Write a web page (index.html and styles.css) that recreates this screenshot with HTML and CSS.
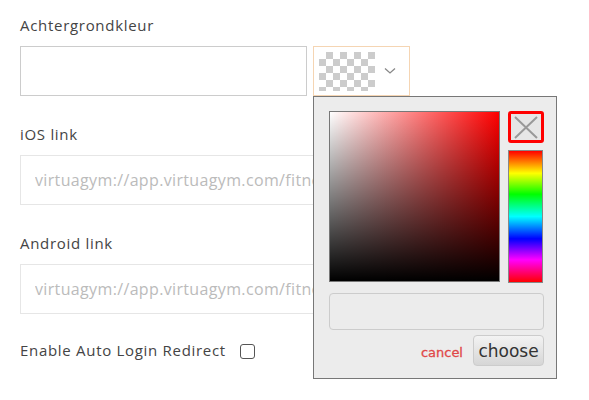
FILE: index.html
```html
<!DOCTYPE html>
<html lang="nl">
<head>
  <meta charset="UTF-8">
  <meta name="viewport" content="width=device-width, initial-scale=1.0">
  <title>Instellingen</title>
  <link rel="stylesheet" href="styles.css">
</head>
<body>
  <div class="form">
    <div class="group">
      <label class="label">Achtergrondkleur</label>
      <div class="color-row">
        <input type="text" class="input color-input">
        <div class="picker-wrap">
          <div class="swatch">
            <span class="checker"></span>
            <svg class="chevron" width="12" height="8" viewBox="0 0 12 8"><path d="M1 1.5 L6 6 L11 1.5" fill="none" stroke="#888" stroke-width="1.3"/></svg>
          </div>
          <div class="picker">
            <div class="picker-top">
              <div class="sat"></div>
              <div class="side">
                <div class="clear">
                  <svg width="28" height="25" viewBox="0 0 28 25"><path d="M3 2 L25 23 M25 2 L3 23" stroke="#999" stroke-width="2"/></svg>
                </div>
                <div class="hue"></div>
              </div>
            </div>
            <input type="text" class="picker-input">
            <div class="picker-actions">
              <a class="cancel">cancel</a>
              <button class="choose">choose</button>
            </div>
          </div>
        </div>
      </div>
    </div>
    <div class="group">
      <label class="label">iOS link</label>
      <input type="text" class="input link-input" placeholder="virtuagym://app.virtuagym.com/fitness/home">
    </div>
    <div class="group">
      <label class="label">Android link</label>
      <input type="text" class="input link-input" placeholder="virtuagym://app.virtuagym.com/fitness/home">
    </div>
    <div class="check-row">
      <label class="label">Enable Auto Login Redirect</label>
      <span class="checkbox"></span>
    </div>
  </div>
</body>
</html>
```

FILE: styles.css
```css
body {
  margin: 0; min-height: 400px; background: #fff; font-family: "Open Sans", Arial, sans-serif; color: #444; }
.form {
  padding: 15px 20px 0 20px; }
.group {
  margin-bottom: 28px; }
.label {
  display: block; font-size: 15px; letter-spacing: 0.7px; line-height: 20px; margin-bottom: 11px; color: #444; }
.input {
  box-sizing: border-box; height: 50px; border: 1px solid #ccc; background: #fff;
  font-family: "Open Sans", Arial, sans-serif; font-size: 16px; letter-spacing: 0.35px; padding: 0 14px; outline: none; }
.color-row {
  display: flex; gap: 6px; }
.color-input {
  width: 287px; }
.link-input {
  width: 400px; border-color: #e6e6e6; }
.link-input::placeholder {
  color: #bbb; }
.picker-wrap {
  position: relative; }
.swatch {
  box-sizing: border-box; width: 97px; height: 50px; border: 1px solid #f5d5b3;
  display: flex; align-items: center; padding-left: 5px; gap: 9px; }
.checker {
  width: 56px; height: 39px;
  background-color: #fff;
  background-image: linear-gradient(45deg, #ccc 25%, transparent 25%, transparent 75%, #ccc 75%),
    linear-gradient(45deg, #ccc 25%, transparent 25%, transparent 75%, #ccc 75%);
  background-size: 14px 14px; background-position: 0 0, 7px 7px; }
.picker {
  position: absolute; left: 0; top: 50px; z-index: 2; box-sizing: border-box; width: 244px; height: 283px;
  background: #ececec; border: 1px solid #777; padding: 14px 12px 0 15px; }
.picker-top {
  display: flex; gap: 8px; }
.sat {
  box-sizing: border-box; width: 172px; height: 171px; border: 1px solid #777;
  background: linear-gradient(to top, #000, transparent), linear-gradient(to right, #fff, #f00); }
.side {
  display: flex; flex-direction: column; gap: 7px; }
.clear {
  box-sizing: border-box; width: 36px; height: 32px; border: 3px solid #f00; border-radius: 3px;
  background: #e6e6e6; display: flex; align-items: center; justify-content: center; }
.hue {
  box-sizing: border-box; width: 35px; height: 133px; border: 1px solid #888;
  background: linear-gradient(to bottom, #f00, #ff0 17%, #0f0 33%, #0ff 50%, #00f 67%, #f0f 83%, #f00); }
.picker-input {
  display: block; box-sizing: border-box; width: 215px; height: 37px; margin-top: 10px;
  border: 1px solid #ccc; border-radius: 4px; background: #ececec; outline: none; }
.picker-actions {
  display: flex; justify-content: flex-end; align-items: center; gap: 10px; margin-top: 5px; }
.cancel {
  font-family: "DejaVu Sans", sans-serif; font-size: 13px; color: #e04848; margin-top: 3px; -webkit-text-stroke: 0.3px #e04848; }
.choose {
  box-sizing: border-box; height: 31px; width: 71px; padding: 0; border: 1px solid #ccc; border-radius: 4px;
  background: linear-gradient(to bottom, #f3f3f3, #d6d6d6); font-family: "DejaVu Sans", sans-serif;
  font-size: 17px; color: #333; }
.check-row {
  display: flex; align-items: center; gap: 14px; margin-top: -2px; }
.check-row .label {
  margin-bottom: 0; }
.checkbox {
  box-sizing: border-box; width: 15px; height: 15px; border: 1.5px solid #555; border-radius: 3px; margin-top: 2px; }
```
